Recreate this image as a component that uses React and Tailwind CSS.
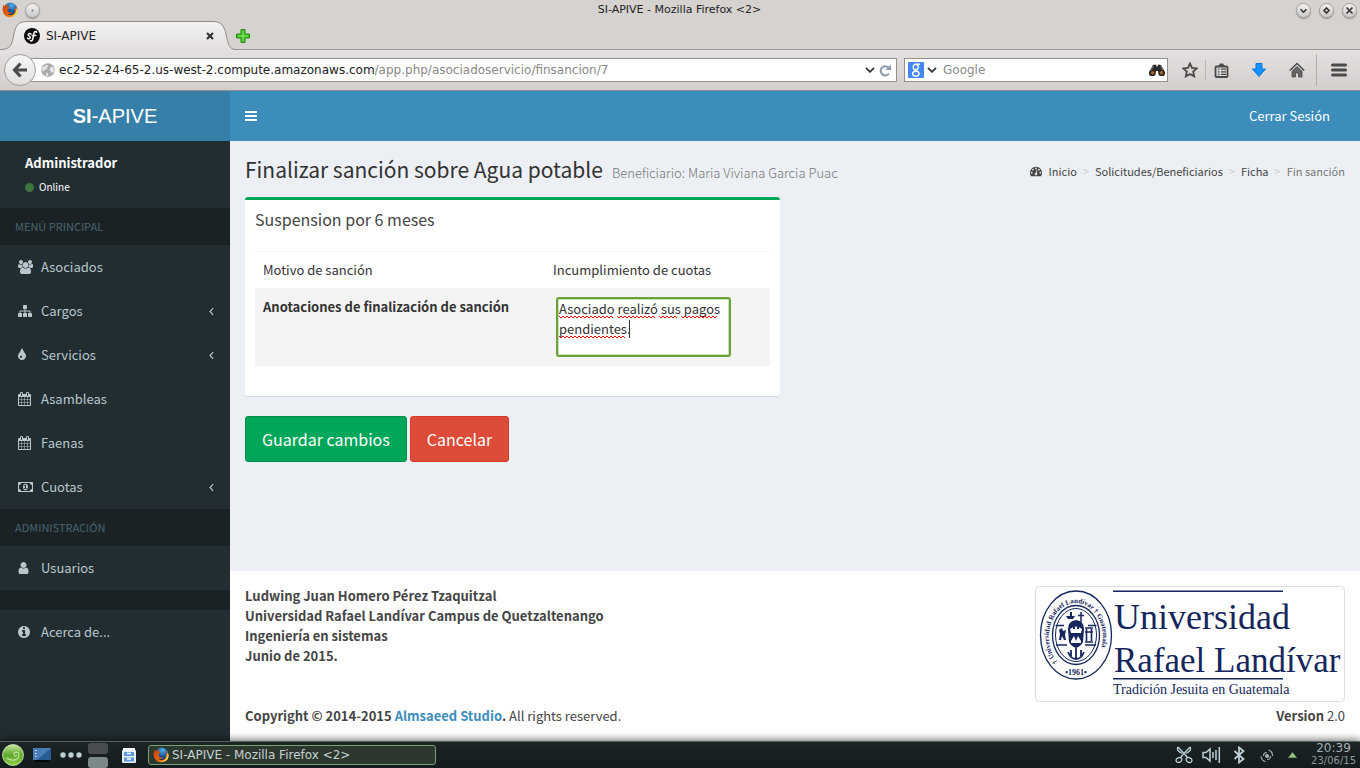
import { useId } from "react";

const FA = {
  users: { box: "0 0 1920 1792", w: "w-[15px]", d: "M593 896q-162 5-265 128h-134q-82 0-138-40.5t-56-118.5q0-353 124-353 6 0 43.5 21t97.5 42.5 119 21.5q67 0 133-23-5 37-5 66 0 159 93 286zm1071 637q0 120-73 189.5t-194 69.5h-874q-121 0-194-69.5t-73-189.5q0-53 3.5-103.5t14-109 26.5-108.5 43-97.5 62-81 85.5-53.5 111.5-20q10 0 43 21.5t73 48 107 48 135 21.5 135-21.5 107-48 73-48 43-21.5q61 0 111.5 20t85.5 53.5 62 81 43 97.5 26.5 108.5 14 109 3.5 103.5zm-1024-1277q0 106-75 181t-181 75-181-75-75-181 75-181 181-75 181 75 75 181zm704 384q0 159-112.5 271.5t-271.5 112.5-271.5-112.5-112.5-271.5 112.5-271.5 271.5-112.5 271.5 112.5 112.5 271.5zm576 225q0 78-56 118.5t-138 40.5h-134q-103-123-265-128 93-127 93-286 0-29-5-66 66 23 133 23 59 0 119-21.5t97.5-42.5 43.5-21q124 0 124 353zm-128-609q0 106-75 181t-181 75-181-75-75-181 75-181 181-75 181 75 75 181z" },
  sitemap: { box: "0 0 1792 1792", w: "w-[14px]", d: "M1792 1248v320q0 40-28 68t-68 28h-320q-40 0-68-28t-28-68v-320q0-40 28-68t68-28h96v-192h-512v192h96q40 0 68 28t28 68v320q0 40-28 68t-68 28h-320q-40 0-68-28t-28-68v-320q0-40 28-68t68-28h96v-192h-512v192h96q40 0 68 28t28 68v320q0 40-28 68t-68 28h-320q-40 0-68-28t-28-68v-320q0-40 28-68t68-28h96v-192q0-52 38-90t90-38h512v-192h-96q-40 0-68-28t-28-68v-320q0-40 28-68t68-28h320q40 0 68 28t28 68v320q0 40-28 68t-68 28h-96v192h512q52 0 90 38t38 90v192h96q40 0 68 28t28 68z" },
  tint: { box: "320 0 1024 1792", w: "w-[8px]", d: "M832 1152q0-36-20-69-1-1-15.5-22.5t-25.5-38-25-44-21-50.5q-4-16-21-16t-21 16q-7 23-21 50.5t-25 44-25.5 38-15.5 22.5q-20 33-20 69 0 53 37.5 90.5t90.5 37.5 90.5-37.5 37.5-90.5zm512-128q0 212-150 362t-362 150-362-150-150-362q0-145 81-275 6-9 62.5-90.5t101-151 99.5-178 83-201.5q9-30 34-47t51-17 51.5 17 33.5 47q28 93 83 201.5t99.5 178 101 151 62.5 90.5q81 127 81 275z" },
  calendar: { box: "64 0 1664 1792", w: "w-[13px]", d: "M192 1664h288v-288h-288v288zm352 0h320v-288h-320v288zm-352-352h288v-320h-288v320zm352 0h320v-320h-320v320zm-352-384h288v-288h-288v288zm736 736h320v-288h-320v288zm-384-736h320v-288h-320v288zm768 736h288v-288h-288v288zm-384-352h320v-320h-320v320zm-352-864v-288q0-13-9.5-22.5t-22.5-9.5h-64q-13 0-22.5 9.5t-9.5 22.5v288q0 13 9.5 22.5t22.5 9.5h64q13 0 22.5-9.5t9.5-22.5zm736 864h288v-320h-288v320zm-384-384h320v-288h-320v288zm384 0h288v-288h-288v288zm32-480v-288q0-13-9.5-22.5t-22.5-9.5h-64q-13 0-22.5 9.5t-9.5 22.5v288q0 13 9.5 22.5t22.5 9.5h64q13 0 22.5-9.5t9.5-22.5zm384-64v1280q0 52-38 90t-90 38h-1408q-52 0-90-38t-38-90v-1280q0-52 38-90t90-38h128v-96q0-66 47-113t113-47h64q66 0 113 47t47 113v96h384v-96q0-66 47-113t113-47h64q66 0 113 47t47 113v96h128q52 0 90 38t38 90z" },
  money: { box: "0 0 1920 1792", w: "w-[15px]", d: "M768 1152h384v-96h-128v-448h-114l-148 137 77 80q42-37 55-57h2v288h-128v96zm512-256q0 70-21 142t-59.5 134-101.5 101-138 39-138-39-101.5-101-59.5-134-21-142 21-142 59.5-134 101.5-101 138-39 138 39 101.5 101 59.5 134 21 142zm512 256v-512q-106 0-181-75t-75-181h-1152q0 106-75 181t-181 75v512q106 0 181 75t75 181h1152q0-106 75-181t181-75zm128-832v1152q0 26-19 45t-45 19h-1792q-26 0-45-19t-19-45v-1152q0-26 19-45t45-19h1792q26 0 45 19t19 45z" },
  user: { box: "256 0 1280 1792", w: "w-[11px]", d: "M1536 1399q0 109-62.5 187t-150.5 78h-854q-88 0-150.5-78t-62.5-187q0-85 8.5-160.5t31.5-152 58.5-131 94-89 134.5-34.5q131 128 313 128t313-128q76 0 134.5 34.5t94 89 58.5 131 31.5 152 8.5 160.5zm-256-887q0 159-112.5 271.5t-271.5 112.5-271.5-112.5-112.5-271.5 112.5-271.5 271.5-112.5 271.5 112.5 112.5 271.5z" },
  info: { box: "128 0 1536 1792", w: "w-[12px]", d: "M1152 1376v-160q0-14-9-23t-23-9h-96v-512q0-14-9-23t-23-9h-320q-14 0-23 9t-9 23v160q0 14 9 23t23 9h96v320h-96q-14 0-23 9t-9 23v160q0 14 9 23t23 9h448q14 0 23-9t9-23zm-128-896v-160q0-14-9-23t-23-9h-192q-14 0-23 9t-9 23v160q0 14 9 23t23 9h192q14 0 23-9t9-23zm640 416q0 209-103 385.5t-279.5 279.5-385.5 103-385.5-103-279.5-279.5-103-385.5 103-385.5 279.5-279.5 385.5-103 385.5 103 279.5 279.5 103 385.5z" },
  dashboard: { box: "0 0 1792 1792", w: "w-[12px]", d: "M384 1152q0-53-37.5-90.5t-90.5-37.5-90.5 37.5-37.5 90.5 37.5 90.5 90.5 37.5 90.5-37.5 37.5-90.5zm192-448q0-53-37.5-90.5t-90.5-37.5-90.5 37.5-37.5 90.5 37.5 90.5 90.5 37.5 90.5-37.5 37.5-90.5zm428 481l101-382q6-26-7.5-48.5t-38.5-29.5-48 6.5-30 39.5l-101 382q-60 5-107 43.5t-63 98.5q-20 77 20 146t117 89 146-20 89-117q16-60-6-117t-72-91zm660-33q0-53-37.5-90.5t-90.5-37.5-90.5 37.5-37.5 90.5 37.5 90.5 90.5 37.5 90.5-37.5 37.5-90.5zm-640-640q0-53-37.5-90.5t-90.5-37.5-90.5 37.5-37.5 90.5 37.5 90.5 90.5 37.5 90.5-37.5 37.5-90.5zm448 192q0-53-37.5-90.5t-90.5-37.5-90.5 37.5-37.5 90.5 37.5 90.5 90.5 37.5 90.5-37.5 37.5-90.5zm320 448q0 261-141 483-19 29-54 29h-1402q-35 0-54-29-141-221-141-483 0-182 71-348t191-286 286-191 348-71 348 71 286 191 191 286 71 348z" },
};

function Icon({ name, className = "h-[14px]" }) {
  const icon = FA[name];
  return (
    <svg viewBox={icon.box} className={`${icon.w} ${className} shrink-0`} fill="currentColor" aria-hidden="true">
      <path d={icon.d} />
    </svg>
  );
}

function FirefoxLogo() {
  const id = useId();
  return (
    <svg viewBox="0 0 32 32" className="size-4 shrink-0" aria-hidden="true">
      <defs>
        <radialGradient id={`${id}g`} cx=".6" cy=".2" r=".7">
          <stop offset="0" stopColor="#4fb4ea" />
          <stop offset=".6" stopColor="#1c5fa8" />
          <stop offset="1" stopColor="#12306b" />
        </radialGradient>
        <linearGradient id={`${id}f`} x1="0" y1="0" x2="1" y2="1">
          <stop offset="0" stopColor="#c8410f" />
          <stop offset=".6" stopColor="#e8650f" />
          <stop offset="1" stopColor="#fdc52d" />
        </linearGradient>
      </defs>
      <circle cx="17" cy="14" r="13" fill={`url(#${id}g)`} />
      <path d="M3 6c1 1 2 2 3 2 2-2 5-3 8-2-2 1-3 3-3 4l4 1c0 2-3 2-4 4 0 2 1 3 1 4 2 3 7 3 10 1-2 4-8 5-11 3 4 5 13 4 15-3 1-4 0-7-2-10 4 2 5 6 5 8 1-4 0-9-2-12 6 6 5 16-1 21-7 6-18 4-22-3C0 18 1 11 3 6z" fill={`url(#${id}f)`} />
      <path d="M28 12c2 9-3 15-10 17 8 1 14-5 13-13z" fill="#ffd84a" />
    </svg>
  );
}

function WindowButton({ label, children }) {
  return (
    <button aria-label={label} className="flex size-[15px] items-center justify-center rounded-full border border-[#a3a09e] bg-gradient-to-b from-[#f3f2f1] to-[#cbc8c6] shadow-[0_1px_1px_#8d8a88]">
      <svg viewBox="0 0 15 15" className="size-[15px] shrink-0" fill="none" stroke="#333" strokeWidth="1.6" aria-hidden="true">
        {children}
      </svg>
    </button>
  );
}

function TitleBar() {
  return (
    <div className="flex h-5 items-center justify-between pr-[3px] pl-0.5 text-[11px] leading-4 text-[#222]">
      <div className="flex flex-1 items-center gap-[7px]">
        <FirefoxLogo />
        <WindowButton label="En todos los escritorios">
          <circle cx="7.5" cy="7.5" r=".6" strokeWidth=".6" />
        </WindowButton>
      </div>
      <span>SI-APIVE - Mozilla Firefox &lt;2&gt;</span>
      <div className="flex flex-1 items-center justify-end gap-2">
        <WindowButton label="Minimizar">
          <path d="M4.5 6.2l3 3 3-3" />
        </WindowButton>
        <WindowButton label="Maximizar">
          <path d="M7.5 5l2.5 2.5-2.5 2.5L5 7.500z" />
        </WindowButton>
        <WindowButton label="Cerrar">
          <path d="M4.500 4.500l6 6m0-6l-6 6" />
        </WindowButton>
      </div>
    </div>
  );
}

function TabStrip() {
  return (
    <div className="flex h-[30px] items-stretch border-b border-[#9b9896]">
      <div className="relative -mb-px h-[30px] w-[236px]">
        <svg viewBox="0 0 236 30" className="absolute inset-0 h-[30px] w-[236px]" aria-hidden="true">
          <defs>
            <linearGradient id="tab-fill" x1="0" y1="0" x2="0" y2="1">
              <stop offset="0" stopColor="#f4f3f2" />
              <stop offset="1" stopColor="#e2dfde" />
            </linearGradient>
          </defs>
          <path d="M0 29.500C8 29.500 11 27 13 19C15 8 16 1.500 27 1.500H213C223 1.500 225 8 227 19C229 27 231 29.500 236 29.500V30H0z" fill="url(#tab-fill)" />
          <path d="M0 29.500C8 29.500 11 27 13 19C15 8 16 1.500 27 1.500H213C223 1.500 225 8 227 19C229 27 231 29.500 236 29.500" fill="none" stroke="#8f8c8a" />
        </svg>
        <div className="relative flex h-full items-center gap-1.5 pt-px pr-[21px] pl-6 text-xs text-[#222]">
          <svg viewBox="0 0 16 16" className="size-4" aria-hidden="true">
            <circle cx="8" cy="8" r="8" fill="#0b0b0b" />
            <path d="M7 6.200C6.300 5 4.200 5.300 4.200 6.700c0 1.500 2.300 1.300 2.100 2.900-.2 1.300-2.300 1.400-2.800.5M12.700 4.200c-.4-1.300-2.300-1-2.700.8L8.800 11c-.3 1.600-1.300 2.200-2.300 1.700M8.200 7.400h3.600" fill="none" stroke="#fff" strokeWidth="1.500" strokeLinecap="round" />
          </svg>
          <span className="flex-1">SI-APIVE</span>
          <button aria-label="Cerrar pestaña" className="p-px">
            <svg viewBox="0 0 8 8" className="size-2" aria-hidden="true">
              <path d="M1 1l6 6m0-6L1 7" stroke="#333" strokeWidth="2.200" />
            </svg>
          </button>
        </div>
      </div>
      <button aria-label="Nueva pestaña" className="flex items-center pt-0.5">
        <svg viewBox="0 0 14 14" className="size-[14px]" aria-hidden="true">
          <path d="M5 .5h4V5h4.500v4H9v4.500H5V9H.5V5H5z" fill="#3cc41e" stroke="#1f8f10" strokeLinejoin="round" />
          <path d="M7 2v10M2 7h10" stroke="#8cec70" />
        </svg>
      </button>
    </div>
  );
}

function Chevron() {
  return (
    <svg viewBox="0 0 10 6" className="h-1.5 w-[10px] shrink-0" aria-hidden="true">
      <path d="M1 .8l4 4 4-4" fill="none" stroke="#333" strokeWidth="1.800" />
    </svg>
  );
}

function Toolbar() {
  return (
    <div className="flex h-[41px] items-center border-b border-[#8f8c8a] bg-gradient-to-b from-[#e3e0df] to-[#d3cfcd] pr-[13px] pl-1 text-xs">
      <button aria-label="Atrás" className="z-10 flex size-8 shrink-0 items-center justify-center rounded-full border border-[#a09d9b] bg-gradient-to-b from-[#f8f7f7] to-[#e2e0df]">
        <svg viewBox="0 0 16 16" className="size-4" aria-hidden="true">
          <path d="M8.500 1.500L2.500 8l6 6.500M3 8h12" fill="none" stroke="#4b4b4b" strokeWidth="3.200" />
        </svg>
      </button>
      <div className="-ml-2 flex h-6 flex-1 items-center border border-[#93908e] bg-white pr-1 pl-3">
        <svg viewBox="0 0 14 14" className="size-[14px] shrink-0" aria-hidden="true">
          <circle cx="7" cy="7" r="6.800" fill="#a9a9a9" />
          <path d="M1.500 4c2 0 2.500-1 4-2.500l2 1.500-2 2 1 1.500H4L2.500 8.500 1 7.500zM9 5l2.500-2 1.500 3v3l-2.500 1-1-2.500H8zM5 9.500l2.500 1-1 2.500H5z" fill="#e6e6e6" />
        </svg>
        <a href="#url" className="ml-1 flex-1 whitespace-nowrap text-[#888]">
          <span className="text-[#222]">ec2-52-24-65-2.us-west-2.compute.amazonaws.com</span>/app.php/asociadoservicio/finsancion/7
        </a>
        <Chevron />
        <button aria-label="Recargar" className="ml-1">
          <svg viewBox="0 0 13 13" className="size-[13px]" aria-hidden="true">
            <path d="M10 9.500A4.600 4.600 0 1 1 9.500 3.500" fill="none" stroke="#8d9bab" strokeWidth="2" />
            <path d="M12 .5v5.500H6.500z" fill="#8d9bab" />
          </svg>
        </button>
      </div>
      <div className="ml-[7px] flex h-6 w-[264px] items-center border border-[#93908e] bg-white pr-0.5 pl-[3px]">
        <svg viewBox="0 0 16 16" className="size-4 shrink-0" aria-hidden="true">
          <rect width="16" height="16" rx="1" fill="#4387f4" />
          <g fill="none" stroke="#fff" strokeWidth="1.400">
            <ellipse cx="7.700" cy="5" rx="2.500" ry="2.700" />
            <ellipse cx="7.800" cy="11.700" rx="3.200" ry="2.400" />
            <path d="M12 2.300H8.500M9 7.500c-2 .5-3 1-1.500 1.700" />
          </g>
        </svg>
        <span className="ml-[3px] flex"><Chevron /></span>
        <input aria-label="Buscar" placeholder="Google" className="ml-1.5 min-w-0 flex-1 outline-none placeholder:text-[#8b8b8b]" />
        <svg viewBox="0 0 16 12" className="h-3 w-4 shrink-0" aria-hidden="true">
          <path d="M4 1l3-.5.5 2h1l.5-2 3 .5 4 7a3.500 3.500 0 0 1-6.500 2.500L9 7H7l-.5 3.500A3.500 3.500 0 0 1 0 8z" fill="#292929" />
          <path d="M4.500 2L2 6.500M11.500 2L14 6.500" stroke="#777" />
          <circle cx="3.600" cy="8.800" r="1.700" fill="#b2631c" />
          <circle cx="12.400" cy="8.800" r="1.700" fill="#b2631c" />
        </svg>
      </div>
      <div className="ml-3.5 flex items-center text-[#4a4a4a]">
        <button aria-label="Añadir a marcadores">
          <svg viewBox="0 0 16 16" className="size-4" aria-hidden="true">
            <path d="M8 1.500l2 4.400 4.700.5-3.500 3.200 1 4.800L8 12l-4.200 2.400 1-4.800L1.300 6.400 6 5.900z" fill="none" stroke="currentColor" strokeWidth="1.800" />
          </svg>
        </button>
        <span className="ml-[7px] h-5 w-px bg-[#b3b4b8]" />
        <button aria-label="Marcadores" className="ml-2">
          <svg viewBox="0 0 15 15" className="size-[15px]" aria-hidden="true">
            <rect x="1.500" y="3.500" width="12" height="10.500" rx="1" fill="none" stroke="currentColor" strokeWidth="1.800" />
            <path d="M4 3.500L6 .5h3l2 3z" fill="currentColor" />
            <path d="M4 6.200h1.500M7 6.200h5M4 8.800h1.500M7 8.800h5M4 11.400h1.500M7 11.400h5" stroke="currentColor" strokeWidth="1.300" />
          </svg>
        </button>
        <button aria-label="Descargas" className="ml-[22px]">
          <svg viewBox="0 0 16 16" className="size-4" aria-hidden="true">
            <path d="M5 1.500h6V7h3.500L8 14.500 1.500 7H5z" fill="#1492ff" stroke="#0d72d8" />
          </svg>
        </button>
        <button aria-label="Inicio" className="ml-[22px]">
          <svg viewBox="0 0 16 16" className="size-4" aria-hidden="true">
            <path d="M.8 8.500L8 1.500l7.200 7" fill="none" stroke="currentColor" strokeWidth="1.500" />
            <path d="M3 9.200l5-4.700 5 4.700V15H9.500v-4h-3v4H3z" fill="#666" stroke="currentColor" strokeWidth=".8" />
          </svg>
        </button>
        <span className="ml-[11px] h-8 w-px bg-[#adaeb3]" />
        <button aria-label="Menú" className="ml-3.5">
          <svg viewBox="0 0 16 14" className="h-3.5 w-4" aria-hidden="true">
            <path d="M1.500 2h13M1.500 7h13M1.500 12h13" stroke="currentColor" strokeWidth="3" strokeLinecap="round" />
          </svg>
        </button>
      </div>
    </div>
  );
}

function MenuItem({ icon, label, expandable }) {
  return (
    <li>
      <a href={`#${icon}`} className="flex h-11 items-center pr-4 pl-[18px] text-[13px] leading-5 text-[#b8c7ce]">
        <span className="flex w-[23px]"><Icon name={icon} /></span>
        <span className="flex-1">{label}</span>
        {expandable && (
          <svg viewBox="0 0 6 10" className="h-[9px] w-[5px]" aria-hidden="true">
            <path d="M5 1L1.200 5 5 9" fill="none" stroke="currentColor" strokeWidth="1.400" />
          </svg>
        )}
      </a>
    </li>
  );
}

function MenuHeader({ children }) {
  return <li className="bg-[#1a2226] px-[15px] py-2.5 text-[11px] leading-[17px] text-[#4b646f]">{children}</li>;
}

function Sidebar() {
  return (
    <aside className="w-[230px] shrink-0 bg-[#222d32]">
      <div className="px-[25px] pt-3 pb-[11px] text-white">
        <p className="text-[13px] leading-5 font-bold">Administrador</p>
        <a href="#online" className="mt-1 flex items-center gap-[5px] text-[10px] leading-5">
          <span className="size-[9px] rounded-full bg-[#3c763d]" />
          Online
        </a>
      </div>
      <ul>
        <MenuHeader>MENÚ PRINCIPAL</MenuHeader>
        <MenuItem icon="users" label="Asociados" />
        <MenuItem icon="sitemap" label="Cargos" expandable />
        <MenuItem icon="tint" label="Servicios" expandable />
        <MenuItem icon="calendar" label="Asambleas" />
        <MenuItem icon="calendar" label="Faenas" />
        <MenuItem icon="money" label="Cuotas" expandable />
        <MenuHeader>ADMINISTRACIÓN</MenuHeader>
        <MenuItem icon="user" label="Usuarios" />
        <li className="h-5 bg-[#1a2226]" />
        <MenuItem icon="info" label="Acerca de..." />
      </ul>
    </aside>
  );
}

function Squiggle({ x, y, width }) {
  let d = `M${x} ${y}`;
  for (let i = 2; i <= width; i += 2) d += `L${x + i} ${y + ((i / 2) % 2 ? 2 : 0)}`;
  return <path d={d} fill="none" stroke="#e00000" strokeWidth="1" />;
}

function SanctionBox() {
  return (
    <section className="w-[calc(50%-15px)] rounded-[3px] border-t-[3px] border-[#00a65a] bg-white px-2.5 pb-[30px] shadow-[0_1px_1px_rgba(0,0,0,0.1)]">
      <h3 className="pt-[9px] text-base leading-5 text-[#444]">Suspension por 6 meses</h3>
      <table className="mt-[22px] w-full table-fixed text-left text-[13px] leading-5">
        <tbody>
          <tr className="border-t border-[#f4f4f4]">
            <td className="w-[290px] p-2">Motivo de sanción</td>
            <td className="p-2">Incumplimiento de cuotas</td>
          </tr>
          <tr className="border-t border-[#f4f4f4] bg-[#f4f4f4] align-top">
            <th className="p-2 font-bold">
              <label htmlFor="notes">Anotaciones de finalización de sanción</label>
            </th>
            <td className="px-[11px] pt-2 pb-[9px]">
              <div className="relative w-[175px]">
                <textarea
                  id="notes"
                  className="block h-[60px] w-full resize-none overflow-hidden rounded-[3px] border-2 border-[#68a43c] bg-white px-px text-[13px] leading-5 shadow-[inset_0_0_0_1px_#c9dfb8] outline-none"
                  defaultValue="Asociado realizó sus pagos pendientes."
                />
                <svg viewBox="0 0 175 60" className="pointer-events-none absolute inset-0 h-[60px] w-[175px]" aria-hidden="true">
                  <Squiggle x={3} y={19} width={54} />
                  <Squiggle x={61} y={19} width={38} />
                  <Squiggle x={103} y={19} width={18} />
                  <Squiggle x={125} y={19} width={36} />
                  <Squiggle x={3} y={39} width={66} />
                  <path d="M73.500 23v18" stroke="#333" />
                </svg>
              </div>
            </td>
          </tr>
        </tbody>
      </table>
    </section>
  );
}

function Crumb({ children }) {
  return (
    <>
      <li><a href={`#${children}`} className="text-[#444]">{children}</a></li>
      <li aria-hidden="true" className="px-1.5 text-[#ccc]">&gt;</li>
    </>
  );
}

function UniversityLogo() {
  const ink = "#14265c";
  return (
    <svg viewBox="0 0 310 116" className="h-[116px] w-[310px]" role="img" aria-label="Universidad Rafael Landívar" fill={ink} fontFamily="Liberation Serif, serif">
      <rect x=".5" y=".5" width="309" height="115" rx="4" fill="#fff" stroke="#ddd" />
      <g fill="none" stroke={ink}>
        <ellipse cx="41" cy="49" rx="35.500" ry="44" strokeWidth="1.300" />
        <ellipse cx="41" cy="49" rx="23.500" ry="29.500" strokeWidth="1.300" />
        <ellipse cx="41" cy="49" rx="20.500" ry="26.500" strokeWidth="1" />
        <path id="seal-top" d="M22.500 76A27 34 0 1 1 60 75" stroke="none" />
        <path d="M20.500 39.500H29M53 39.500h8.500M21 59h11M50 59h11" strokeWidth="1.400" />
        <path d="M46 26v11M43 29.500h6" strokeWidth="1.500" />
        <path d="M54 42h-4m0 4h8M54 42h4M51.500 43v12M56.500 43v12M50 56h8" strokeWidth="1.600" />
        <path d="M33 66c2 5 4 7 8 7s6-2 8-7M36 64v6M46 64v6M41 62v10" strokeWidth="1.800" />
      </g>
      <path d="M31 30h9l-2 3h-5zM35 26h2v4h-2zM24 44l3-2 1 3 3-1-1 5 1 5h-2l-2-4-1 4h-2l1-6z" />
      <path d="M33 43q0-8 8-9q8 1 8 9l-1 13q-2 4-7 6q-5-2-7-6z" />
      <path d="M35 43q6-5 12 0l-1 4H36zM36 55l3-5 2 5 2-5 3 5v2H36z" fill="#fff" />
      <path d="M38 41h2v2h-2zM42 41h2v2h-2z" />
      <text fontSize="7" fontWeight="bold"><textPath href="#seal-top">† Universidad Rafael Landívar † Guatemala</textPath></text>
      <text x="41" y="89" textAnchor="middle" fontSize="8" fontWeight="bold">•1961•</text>
      <path d="M78 4.500h170v1.500H78zM78 92h170v1.500H78z" />
      <text x="79" y="43" fontSize="36">Universidad</text>
      <text x="79" y="86" fontSize="35">Rafael Landívar</text>
      <text x="78" y="108" fontSize="14">Tradición Jesuita en Guatemala</text>
    </svg>
  );
}

function Content() {
  return (
    <div className="flex min-w-0 flex-1 flex-col text-[#333]">
      <main className="flex-1 bg-[#ecf0f5] px-[15px] pt-4">
        <div className="flex h-7 items-center justify-between">
          <h1 className="flex items-baseline gap-[9px] text-[21px] leading-7">
            Finalizar sanción sobre Agua potable
            <small className="text-[13px] font-light text-[#777]">Beneficiario: Maria Viviana Garcia Puac</small>
          </h1>
          <ol className="flex items-center text-[11px] leading-5">
            <li className="mr-[7px] text-[#444]"><Icon name="dashboard" className="h-3" /></li>
            <Crumb>Inicio</Crumb>
            <Crumb>Solicitudes/Beneficiarios</Crumb>
            <Crumb>Ficha</Crumb>
            <li className="text-[#777]">Fin sanción</li>
          </ol>
        </div>
        <div className="mt-3">
          <SanctionBox />
        </div>
        <div className="mt-5 flex gap-[3px] text-base leading-6 text-white">
          <button className="h-[46px] rounded-[3px] border border-[#008d4c] bg-[#00a65a] px-4">Guardar cambios</button>
          <button className="h-[46px] rounded-[3px] border border-[#d73925] bg-[#dd4b39] px-4">Cancelar</button>
        </div>
      </main>
      <footer className="bg-white p-[15px] text-[13px] leading-5 text-[#444]">
        <div className="flex items-start justify-between">
          <p className="font-bold">
            Ludwing Juan Homero Pérez Tzaquitzal<br />
            Universidad Rafael Landívar Campus de Quetzaltenango<br />
            Ingeniería en sistemas<br />
            Junio de 2015.
          </p>
          <UniversityLogo />
        </div>
        <div className="mt-1 flex justify-between">
          <p><b>Copyright © 2014-2015 <a href="#studio" className="text-[#3c8dbc]">Almsaeed Studio</a>.</b> All rights reserved.</p>
          <p><b>Version</b> 2.0</p>
        </div>
      </footer>
    </div>
  );
}

function Taskbar() {
  return (
    <div className="relative flex h-[27px] items-center border-t border-[#5b6062] bg-gradient-to-b from-[#1c2426] to-[#141b1d] pr-1 pl-0.5 shadow-[0_0_8px_1px_rgba(0,0,0,0.6)]">
      <button aria-label="Menú de aplicaciones">
        <svg viewBox="0 0 22 22" className="size-[22px]" aria-hidden="true">
          <defs>
            <linearGradient id="menu-fill" x1="0" y1="0" x2="0" y2="1">
              <stop offset="0" stopColor="#c9e8a0" />
              <stop offset=".5" stopColor="#5fa92c" />
              <stop offset="1" stopColor="#8fd046" />
            </linearGradient>
          </defs>
          <circle cx="11" cy="11" r="10.500" fill="url(#menu-fill)" stroke="#d2e8b8" strokeWidth=".8" />
          <path d="M5 14c5 4 12 2 12-3 0-3-4-4-5-1-.5 2 2 3 3 1" fill="none" stroke="#c3e4a0" strokeWidth="1.100" />
        </svg>
      </button>
      <svg viewBox="0 0 18 14" className="ml-[9px] h-3.5 w-[18px]" aria-hidden="true">
        <path d="M0 0h18v12H0z" fill="#285b93" />
        <path d="M0 0h18L4 12H0z" fill="#487eb5" />
        <path d="M2 2.500h1.500M2 5.500h1.500M2 8.500h1.500" stroke="#e4eef8" />
        <path d="M2 12h14v2H2z" fill="#05080b" />
      </svg>
      <svg viewBox="0 0 22 6" className="ml-[9px] h-1.5 w-[22px]" fill="#bccfd6" aria-hidden="true">
        <circle cx="3" cy="3" r="2.700" /><circle cx="11" cy="3" r="2.700" /><circle cx="19" cy="3" r="2.700" />
      </svg>
      <div className="ml-1.5 flex flex-col gap-[3px]">
        <button aria-label="Escritorio 1" className="h-[11px] w-5 rounded-[3px] bg-[#484e50]" />
        <button aria-label="Escritorio 2" className="h-[11px] w-5 rounded-[3px] bg-[#7c8789]" />
      </div>
      <svg viewBox="0 0 14 15" className="ml-3.5 h-[15px] w-3.5" aria-hidden="true">
        <path d="M1 0h12v3H1z" fill="#fff" />
        <rect y="2" width="14" height="13" rx="1" fill="#e9f1f8" />
        <path d="M2 4h10v4H2zM2 9.500h10v4H2z" fill="#5d9bd8" />
        <path d="M5 5.500h4M5 11h4" stroke="#fff" strokeWidth="1.500" />
      </svg>
      <button className="ml-3 flex h-5 w-72 items-center gap-[3px] rounded-[3px] border border-[#77a370] bg-[#2c372e] px-1 text-xs text-[#c5d3d3]">
        <FirefoxLogo />
        SI-APIVE - Mozilla Firefox &lt;2&gt;
      </button>
      <div className="ml-auto flex items-center text-[#bccfd6]">
        <svg viewBox="0 0 18 18" className="size-[18px]" fill="none" stroke="currentColor" strokeWidth="1.300" aria-hidden="true">
          <path d="M3 1l10 11M15 1L5 12M3 1c-1.500 2-.5 4 4 6.500M15 1c1.500 2 .5 4-4 6.500" />
          <ellipse cx="4" cy="14" rx="3" ry="2.300" transform="rotate(-25 4 14)" />
          <ellipse cx="14" cy="14" rx="3" ry="2.300" transform="rotate(25 14 14)" />
        </svg>
        <svg viewBox="0 0 19 18" className="ml-[9px] h-[18px] w-[19px]" fill="none" stroke="currentColor" strokeWidth="1.500" aria-hidden="true">
          <path d="M1 6.500h3L8 3v12l-4-3.500H1zM11 6v6M14 4v10M17.300 1v16" />
        </svg>
        <svg viewBox="0 0 12 18" className="ml-3 h-[18px] w-3" fill="none" stroke="currentColor" strokeWidth="1.800" aria-hidden="true">
          <path d="M1.500 5l9 8L6 16.500v-15L10.500 5l-9 8" />
        </svg>
        <svg viewBox="0 0 14 14" className="ml-[15px] size-3.5" fill="none" stroke="#a0aeb2" strokeWidth="1.200" aria-hidden="true">
          <circle cx="7" cy="8" r="1.500" fill="#a0aeb2" />
          <path d="M7 4.500A3.500 3.500 0 0 0 3.500 8M8.500 2A6 6 0 0 1 12.500 8M7 11.500A3.500 3.500 0 0 0 10.500 8M1 8.500A6 6 0 0 0 5.500 13.500" />
        </svg>
        <svg viewBox="0 0 10 6" className="ml-[14px] h-1.5 w-[9px]" aria-hidden="true"><path d="M5 0l5 6H0z" fill="#8fc07c" /></svg>
        <div className="ml-3.5 flex flex-col items-center text-[#a3afb2]">
          <span className="text-xs leading-3">20:39</span>
          <span className="text-[10px] leading-[14px] text-[#8c9799]">23/06/15</span>
        </div>
      </div>
    </div>
  );
}

export default function App() {
  return (
    <div className="flex min-h-screen flex-col bg-[#d6d2d0] font-['DejaVu_Sans',sans-serif]">
      <TitleBar />
      <TabStrip />
      <Toolbar />
      <div className="flex flex-1 flex-col font-['Noto_Sans_CJK_SC',sans-serif]">
        <header className="flex h-[50px] items-center bg-[#3c8dbc] text-white">
          <a href="#home" className="flex h-full w-[230px] items-center justify-center bg-[#367fa9] font-['Liberation_Sans',sans-serif] text-xl">
            <b>SI</b>-APIVE
          </a>
          <button aria-label="Alternar navegación" className="ml-[15px]">
            <svg viewBox="0 0 12 10" className="h-[10px] w-3" aria-hidden="true">
              <path d="M0 1h12M0 5h12M0 9h12" stroke="#fff" strokeWidth="2" />
            </svg>
          </button>
          <a href="#logout" className="mr-[30px] ml-auto text-[13px] leading-5">Cerrar Sesión</a>
        </header>
        <div className="flex flex-1">
          <Sidebar />
          <Content />
        </div>
      </div>
      <Taskbar />
    </div>
  );
}
